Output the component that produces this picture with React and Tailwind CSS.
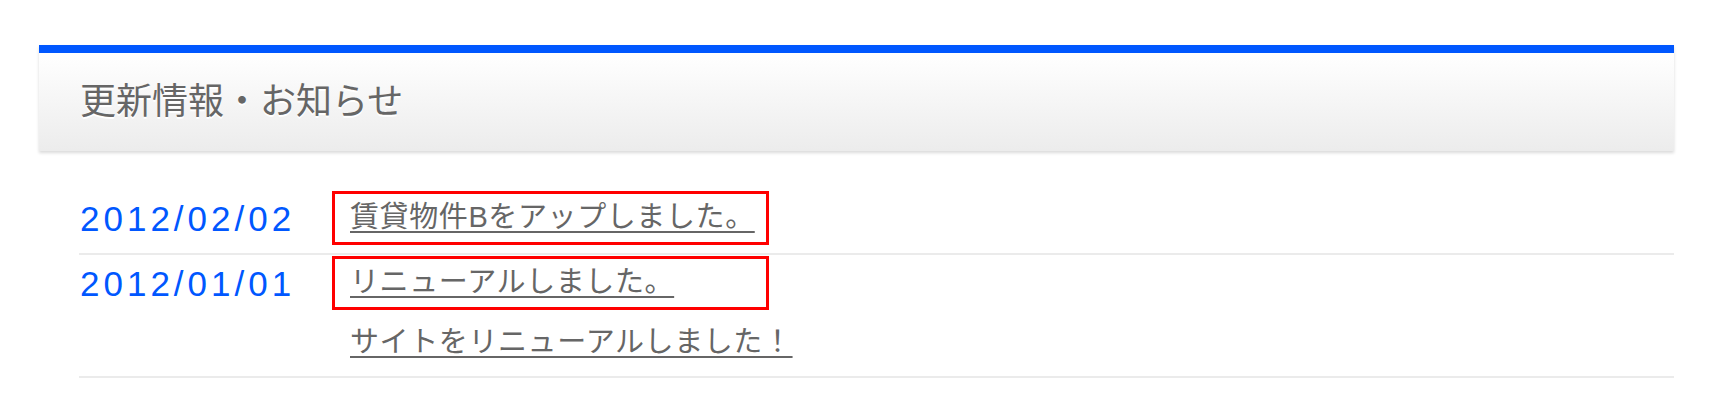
import React from "react";

const news = [
  { date: "2012/02/02", title: "賃貸物件Bをアップしました。" },
  {
    date: "2012/01/01",
    title: "リニューアルしました。",
    body: "サイトをリニューアルしました！",
  },
];

const jp = "font-['Liberation_Sans','Noto_Sans_CJK_JP',sans-serif]";

const App = () => {
  return (
    <div className={`min-h-[420px] bg-white pt-[45px] pl-[39px] pr-[38px] ${jp}`}>
      <section>
        {/* heading */}
        <div className="border-t-[8px] border-[#0057ff] bg-gradient-to-b from-[#ffffff] to-[#ececec] shadow-[0_2px_3px_rgba(0,0,0,0.15)]">
          <h2 className="flex h-[98px] items-center pl-[41px] text-[36px] font-normal text-[#666666] [text-shadow:0_2px_0_#ffffff]">
            更新情報・お知らせ
          </h2>
        </div>

        {/* list */}
        <dl className="mt-[20px] ml-[40px]">
          {news.map((item, i) => (
            <div
              key={item.date}
              className={[
                "flex border-b-2 border-[#ebebeb]",
                i === 0 ? "pt-[20px] pb-[8px]" : "pt-[1px] pb-[6px]",
              ].join(" ")}
            >
              <dt className="flex h-[54px] w-[253px] shrink-0 items-center pt-[3px] pl-[1px] text-[35px] tracking-[4px] text-[#0057ff]">
                {item.date}
              </dt>
              <dd>
                <div className="flex h-[54px] w-[437px] items-center border-[3px] border-[#ff0000] pl-[15px]">
                  <a
                    href="#"
                    className="text-[29px] tracking-[0.6px] text-[#666666] underline decoration-2 underline-offset-[4px]"
                  >
                    {item.title}
                  </a>
                </div>
                {item.body && (
                  <div className="mt-[6px] flex h-[54px] items-center pl-[18px]">
                    <a
                      href="#"
                      className="text-[29px] tracking-[0.6px] text-[#666666] underline decoration-2 underline-offset-[4px]"
                    >
                      {item.body}
                    </a>
                  </div>
                )}
              </dd>
            </div>
          ))}
        </dl>
      </section>
    </div>
  );
};

export default App;
